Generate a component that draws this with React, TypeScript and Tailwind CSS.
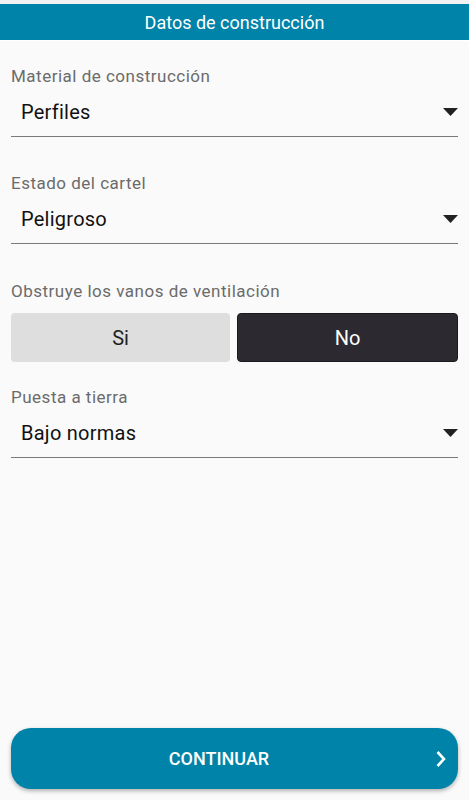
import React, { useState } from "react";

const font = { fontFamily: "Roboto, 'Noto Sans', sans-serif" };

function Caret() {
  return (
    <svg width="15" height="8" viewBox="0 0 15 8" className="shrink-0">
      <path d="M0 0 L15 0 L7.5 8 Z" fill="#212121" />
    </svg>
  );
}

function SelectField({ label, value, top }: { label: string; value: string; top: string }) {
  return (
    <div className={top}>
      <div className="text-[17px] leading-[20px] tracking-[0.5px] text-[#6b6b6b]">{label}</div>
      <div className="mt-[14px] flex items-center justify-between border-b border-[#7a7a7a] pb-[12px] pl-[10px]">
        <span className="text-[20px] leading-[24px] tracking-[0.25px] text-[#111]">{value}</span>
        <Caret />
      </div>
    </div>
  );
}

export default function App() {
  const [obstruye, setObstruye] = useState<"si" | "no">("no");

  return (
    <div style={font} className="flex h-[800px] w-full flex-col bg-[#fafafa]">
      <div className="h-[4px] bg-[#f2f2f2]" />
      <div className="flex h-[37px] items-center justify-center border-b border-white bg-[#0083a8] text-[18px] text-white">
        Datos de construcción
      </div>

      <div className="flex flex-1 flex-col px-[11px]">
        <SelectField top="mt-[25px]" label="Material de construcción" value="Perfiles" />
        <SelectField top="mt-[36px]" label="Estado del cartel" value="Peligroso" />

        <div className="mt-[37px]">
          <div className="text-[17px] leading-[20px] tracking-[0.5px] text-[#6b6b6b]">Obstruye los vanos de ventilación</div>
          <div className="mt-[12px] flex gap-[7px]">
            <button
              onClick={() => setObstruye("si")}
              className={
                obstruye === "si"
                  ? "h-[49px] flex-1 rounded-[4px] border border-[#1a191d] bg-[#2c2a30] text-[20px] text-white"
                  : "h-[49px] flex-1 rounded-[4px] bg-[#dedede] text-[20px] text-[#222]"
              }
            >
              Si
            </button>
            <button
              onClick={() => setObstruye("no")}
              className={
                obstruye === "no"
                  ? "h-[49px] flex-1 rounded-[4px] border border-[#1a191d] bg-[#2c2a30] text-[20px] text-white"
                  : "h-[49px] flex-1 rounded-[4px] bg-[#dedede] text-[20px] text-[#222]"
              }
            >
              No
            </button>
          </div>
        </div>

        <SelectField top="mt-[25px]" label="Puesta a tierra" value="Bajo normas" />

        <button className="mb-[11px] mt-auto flex h-[61px] items-center rounded-[20px] bg-[#0083a8] pr-[11px] text-white shadow-[0_2px_4px_rgba(0,0,0,0.3)]">
          <span className="flex-1 pr-[8px] text-center text-[18px] font-medium">CONTINUAR</span>
          <svg width="12" height="18" viewBox="0 0 12 18" className="shrink-0">
            <path d="M2.5 2 L9 9 L2.5 16" fill="none" stroke="white" strokeWidth="2.6" />
          </svg>
        </button>
      </div>
    </div>
  );
}
